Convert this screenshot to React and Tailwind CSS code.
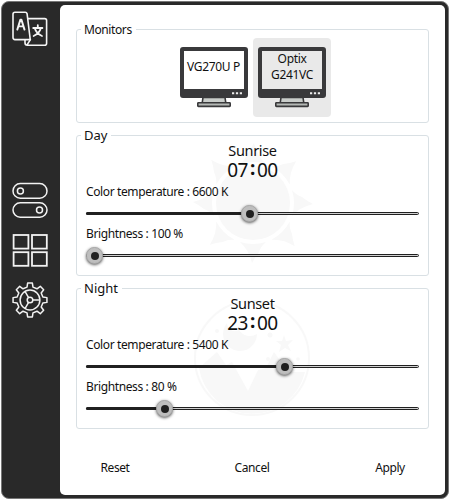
import React from "react";

function TranslateIcon() {
  return (
    <svg width="36" height="36" viewBox="0 0 36 36" fill="none" stroke="#f5f5f5" strokeWidth="1.6" strokeLinejoin="round" strokeLinecap="round">
      <path d="M3 1.3H13.2Q14.7 1.3 15.1 2.8L18 26.5L18.2 28.6H3Q1 28.6 1 26.6V3.3Q1 1.3 3 1.3Z" />
      <path d="M16 7.6H32.7Q34.6 7.6 34.6 9.6V32.2Q34.6 34.2 32.7 34.2H15.3Q13 34.2 13 31.7V28.9M15.2 33.6L18.4 28.6" />
      <path d="M5.3 18.6L8.4 8.6H9.4L12.5 18.6M6.4 15.4H11.4" strokeWidth="1.9" />
      <path d="M21.2 17H30.4M25.8 14.2V16.8M28.8 17.3C27.8 20.8 25.5 23.4 21.6 25M22.8 17.3C23.8 20.8 26.1 23.4 30 25" strokeWidth="1.8" />
    </svg>
  );
}

function TogglesIcon() {
  return (
    <svg width="36" height="36" viewBox="0 0 36 36" fill="none" stroke="#f2f2f2" strokeWidth="1.5">
      <rect x="1" y="1.6" width="34" height="14.6" rx="7.3" />
      <circle cx="8.4" cy="8.9" r="3" />
      <rect x="1" y="20.8" width="34" height="14.4" rx="7.2" />
      <circle cx="27.5" cy="28" r="3" />
    </svg>
  );
}

function GridIcon() {
  return (
    <svg width="36" height="34" viewBox="0 0 36 34" fill="none" stroke="#f2f2f2" strokeWidth="1.8">
      <rect x="1.6" y="2" width="14.8" height="13.6" />
      <rect x="20" y="2" width="14.8" height="13.6" />
      <rect x="1.6" y="19.2" width="14.8" height="13.6" />
      <rect x="20" y="19.2" width="14.8" height="13.6" />
    </svg>
  );
}

function GearIcon() {
  const teeth = [0, 45, 90, 135, 180, 225, 270, 315];
  const point = (radius, degrees) => {
    const a = ((degrees - 90) * Math.PI) / 180;
    return `${(18 + radius * Math.cos(a)).toFixed(2)} ${(18 + radius * Math.sin(a)).toFixed(2)}`;
  };
  const outline =
    "M" +
    teeth
      .map((t) => [point(13.2, t - 13), point(17.1, t - 8), point(17.1, t + 8), point(13.2, t + 13)].join("L"))
      .join("L") +
    "Z";
  return (
    <svg width="36" height="36" viewBox="0 0 36 36" fill="none" stroke="#f2f2f2" strokeWidth="1.5" strokeLinejoin="round">
      <path d={outline} />
      <circle cx="18" cy="18" r="9.9" />
      <circle cx="18" cy="18" r="2.8" />
      <path d="M20.8 18H27.9M16.6 15.6L13 9.4M16.6 20.4L13 26.6" />
    </svg>
  );
}

function Monitor({ lines, selected }) {
  return (
    <div className={"relative h-[79px] w-[78px] rounded-[4px] " + (selected ? "bg-[#e9e9e9]" : "")}>
      <svg className="block" width="78" height="79" viewBox="0 0 78 79">
        <path d="M28 59.5H50L50.8 65H27.2Z" fill="#c9cdca" stroke="#39393b" strokeWidth="1.6" />
        <rect x="22.8" y="64.8" width="32.4" height="3.6" rx="0.6" fill="#b4b8b5" stroke="#39393b" strokeWidth="1.6" />
        <path
          fillRule="evenodd"
          d="M8 9H70Q73 9 73 12V57Q73 60 70 60H8Q5 60 5 57V12Q5 9 8 9ZM9 13V51H69V13Z"
          fill="#39393b"
        />
        <path d="M57 54.2h2.2v2H57zM60.9 54.2h2.2v2h-2.2zM64.8 54.2H67v2h-2.2z" fill="#eee" />
      </svg>
      <div className={"absolute inset-x-0 text-center text-[12px] leading-[16px] tracking-[-0.35px] " + (selected ? "top-[13px]" : "top-[21px] -left-[1px]")}>
        {lines.map((line) => (
          <div key={line}>{line}</div>
        ))}
      </div>
    </div>
  );
}

function SunArt() {
  return (
    <svg className="absolute left-[116px] top-[7px]" width="122" height="125" viewBox="-60 -60 122 125" fill="#f8f8f8">
      <circle r="37" />
      {[0, 45, 90, 135, 180, 225, 270, 315].map((a) => (
        <path key={a} d="M-13 -39Q0 -43 13 -39Q4 -47 1 -60Q-2 -54 -6 -49Q-8 -43 -13 -39Z" transform={`rotate(${a})`} />
      ))}
    </svg>
  );
}

function MoonArt() {
  return (
    <svg className="absolute left-[115px] top-[9px]" width="120" height="120" viewBox="-60 -60 120 120" fill="#f8f8f8">
      <circle r="57" fill="none" stroke="#f8f8f8" strokeWidth="2" />
      <path d="M-53 10L-35 -6L-26 7L-20 4L-4 33L6 12L14 10L22 -6L36 14L53 14A54 54 0 0 1 -53 10Z" />
      <path d="M-25 -35A17 17 0 1 0 5 -24A13 13 0 0 1 -13 -28A8 8 0 0 1 -25 -35Z" />
      <path d="M32 -23L34 -17L41 -18L36 -13L39 -7L33 -10L27 -6L29 -13L24 -17L30 -17Z" />
      <circle cx="18" cy="-23" r="2.5" />
      <circle cx="16" cy="1" r="2" />
      <circle cx="37" cy="1" r="1.8" />
      <circle cx="46" cy="1" r="1.8" />
      <circle cx="-35" cy="-27" r="2" />
    </svg>
  );
}

function Slider({ position }) {
  return (
    <div className="relative h-[17px] w-full">
      <div className="absolute inset-x-0 top-[7px] h-[3px] rounded-full border border-[#202020] bg-[#d0d0d0]" />
      <div className="absolute left-0 top-[7px] h-[3px] rounded-full bg-[#202020]" style={{ width: position }} />
      <div
        className="absolute top-0 flex size-[17px] items-center justify-center rounded-full border border-[#a9a9a9] bg-[#bebebe] shadow-[0_1px_3px_rgba(0,0,0,0.65)]"
        style={{ left: position - 8.5 }}
      >
        <div className="size-[8px] rounded-full bg-[#202020]" />
      </div>
    </div>
  );
}

function Group({ title, titleClass, className, children }) {
  return (
    <div className={"relative w-[353px] rounded-[3px] border border-[#d9e0e4] " + className}>
      <div className={"absolute left-[4px] z-10 bg-white pl-[3px] pr-[4px] leading-[16px] " + titleClass}>{title}</div>
      {children}
    </div>
  );
}

function Period({ title, titleClass, event, hours, minutes, temperature, tempPosition, brightness, brightPosition, art, className }) {
  return (
    <Group title={title} titleClass={titleClass} className={"h-[141px] " + className}>
      {art}
      <div className="relative flex flex-col px-[9px] pt-[5px]">
        <div className="h-[18px] text-center text-[14.5px] leading-[18px] tracking-[-0.35px]">{event}</div>
        <div className="flex h-[22px] items-center justify-center text-[19px] leading-[22px] tracking-[-0.5px]">
          <span>{hours}</span>
          <span className="w-[9px] -translate-y-[2px] text-center font-bold">:</span>
          <span>{minutes}</span>
        </div>
        <div className="h-[24px] pt-px text-[12px] leading-[20px] tracking-[-0.38px]">{temperature}</div>
        <Slider position={tempPosition} />
        <div className="h-[25px] pt-[2px] text-[12px] leading-[20px] tracking-[-0.38px]">{brightness}</div>
        <Slider position={brightPosition} />
      </div>
    </Group>
  );
}

export default function App() {
  return (
    <div className="h-[500px] w-[450px] bg-white p-px font-['Noto_Sans','Open_Sans',sans-serif] text-[#111]">
      <div className="flex h-[498px] w-[448px] rounded-[8px] border border-[#777] bg-[#292929] pb-[3px] pr-[3px] pt-[3px]">
        <nav className="flex w-[58px] shrink-0 flex-col items-center pr-[2px] pt-[6px]">
          <TranslateIcon />
          <div className="mt-[135px] flex flex-col items-center">
            <TogglesIcon />
            <div className="mt-[15px]">
              <GridIcon />
            </div>
            <div className="mt-[15px]">
              <GearIcon />
            </div>
          </div>
        </nav>
        <main className="flex flex-1 flex-col rounded-[5px] bg-white pl-4 pt-6">
          <Group title="Monitors" titleClass="top-[-8px] text-[12px] tracking-[-0.4px]" className="h-[94px]">
            <div className="flex justify-center pl-[1px] pt-[8px]">
              <Monitor lines={["VG270U P"]} />
              <Monitor lines={["Optix", "G241VC"]} selected />
            </div>
          </Group>
          <Period
            className="mt-[12px]"
            title="Day"
            titleClass="top-[-9px] text-[13px]"
            event="Sunrise"
            hours="07"
            minutes="00"
            temperature="Color temperature : 6600 K"
            tempPosition={163.5}
            brightness="Brightness : 100 %"
            brightPosition={8.5}
            art={<SunArt />}
          />
          <Period
            className="mt-[12px]"
            title="Night"
            titleClass="top-[-9px] text-[13px]"
            event="Sunset"
            hours="23"
            minutes="00"
            temperature="Color temperature : 5400 K"
            tempPosition={198.5}
            brightness="Brightness : 80 %"
            brightPosition={78.5}
            art={<MoonArt />}
          />
          <div className="mt-[29px] flex w-[353px] text-[12px] leading-[20px] tracking-[-0.4px]">
            <button className="w-[78px]">Reset</button>
            <button className="ml-[59px] w-[78px]">Cancel</button>
            <button className="ml-[60px] w-[78px]">Apply</button>
          </div>
        </main>
      </div>
    </div>
  );
}
